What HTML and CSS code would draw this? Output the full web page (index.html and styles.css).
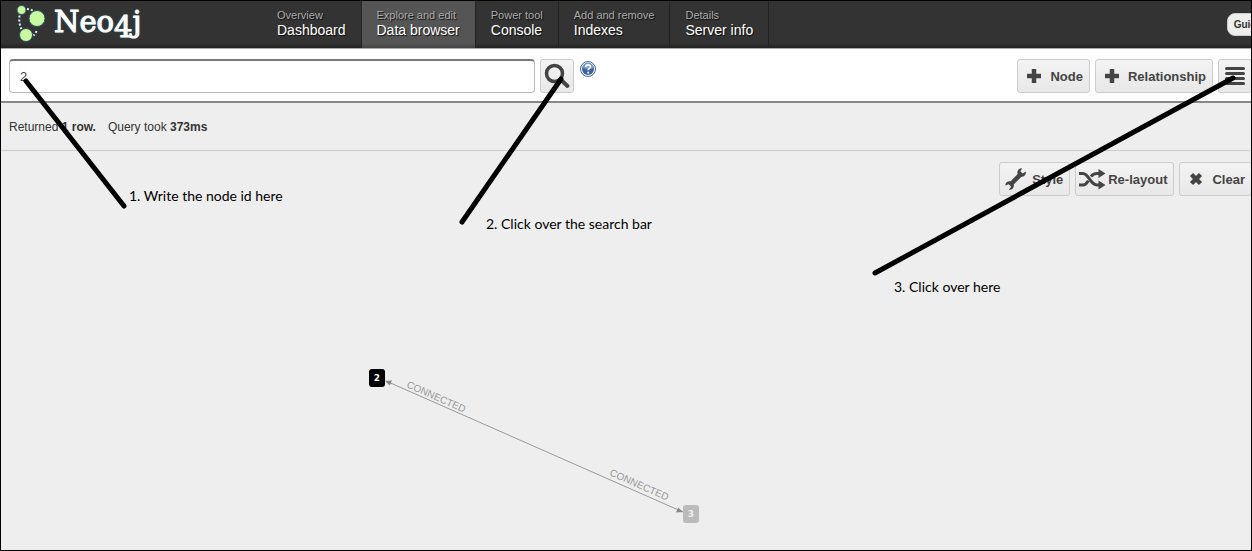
FILE: index.html
```html
<!DOCTYPE html>
<html lang="en">
<head>
<meta charset="utf-8">
<title>Neo4j Data browser</title>
<link rel="stylesheet" href="styles.css">
</head>
<body>
<div class="frame">
  <header class="header">
    <a class="logo" href="#">
      <svg class="logo-mark" viewBox="0 0 32 40" width="32" height="40" aria-hidden="true">
        <g class="logo-dots">
          <path d="M11 5l3.500.5 3 1.500M3.500 11.500l-.3 3.500.3 4 1 4 1.500 3.500M20.500 27l-1 2.500-2 2"/>
        </g>
        <g class="logo-nodes">
          <circle cx="5.500" cy="6" r="4.500"/>
          <circle cx="21" cy="14.500" r="8"/>
          <circle cx="10" cy="31" r="6.500"/>
        </g>
      </svg>
      <span class="logo-text">Neo<span class="logo-figure">4</span>j</span>
    </a>
    <nav class="tabs">
      <a class="tab" href="#"><span class="tab-note">Overview</span><span class="tab-name">Dashboard</span></a>
      <a class="tab tab-active" href="#"><span class="tab-note">Explore and edit</span><span class="tab-name">Data browser</span></a>
      <a class="tab" href="#"><span class="tab-note">Power tool</span><span class="tab-name">Console</span></a>
      <a class="tab" href="#"><span class="tab-note">Add and remove</span><span class="tab-name">Indexes</span></a>
      <a class="tab" href="#"><span class="tab-note">Details</span><span class="tab-name">Server info</span></a>
    </nav>
    <button class="guide" type="button">Guide</button>
  </header>

  <div class="toolbar">
    <input class="query" type="text" value="2" aria-label="Query">
    <button class="button" type="button" aria-label="Search">
      <svg class="icon" viewBox="0 0 32 32" width="32" height="32"><circle cx="13.500" cy="13.500" r="8" fill="none" stroke="#444" stroke-width="3.500"/><path d="M19.500 19.500l7 6.500" stroke="#444" stroke-width="4" stroke-linecap="round"/></svg>
    </button>
    <a class="help" href="#" aria-label="Help">
      <svg viewBox="0 0 16 16" width="16" height="16"><circle cx="8" cy="8" r="7.500" fill="#fff" stroke="#3e66a0"/><circle cx="8" cy="8" r="6" fill="#3a639f"/><path d="M2.500 7a5.500 5.500 0 0 1 11 0q-5 2-11 0z" fill="#7899c6"/><path d="M5.700 6.200c0-3.200 4.700-3.100 4.700-.4 0 1.700-2.300 1.700-2.300 3.500M8.100 10.800v1.600" fill="none" stroke="#fff" stroke-width="1.700"/></svg>
    </a>
    <div class="actions">
      <button class="button" type="button"><svg class="icon" viewBox="0 0 32 32" width="32" height="32"><path d="M16 9v14M9 16h14" stroke="#444" stroke-width="4.500"/></svg><span class="button-text">Node</span></button>
      <button class="button" type="button"><svg class="icon" viewBox="0 0 32 32" width="32" height="32"><path d="M16 9v14M9 16h14" stroke="#444" stroke-width="4.500"/></svg><span class="button-text">Relationship</span></button>
      <button class="button" type="button" aria-label="Switch view"><svg class="icon" viewBox="0 0 32 32" width="32" height="32"><path d="M7.500 8.500h17M7.500 13.500h17M7.500 18.500h17M7.500 23.500h17" stroke="#444" stroke-width="3" stroke-linecap="round"/></svg></button>
    </div>
  </div>

  <p class="result"><span>Returned <b>1 row.</b></span><span>Query took <b>373ms</b></span></p>

  <main class="canvas">
    <div class="actions">
      <button class="button" type="button"><svg class="icon" viewBox="0 0 32 32" width="32" height="32"><path d="M10 22L22 10" stroke="#444" stroke-width="4.500"/><path d="M25.800 8.500a4.300 4.300 0 1 1-3.600-3.300L20.300 8.300l2 2.500zM5.300 22.500a4.300 4.300 0 1 1 3.600 4.200l2.200-3-2.200-2.500z" fill="#444"/></svg><span class="button-text">Style</span></button>
      <button class="button" type="button"><svg class="icon" viewBox="0 0 32 32" width="32" height="32"><path d="M3 10.500h4c6 0 7 11.500 14 11.500h3M3 22h4c2.500 0 4-2 5.300-4.200M15 13.500c1.500-2 3-3 6-3h3" fill="none" stroke="#444" stroke-width="3"/><path d="M22.500 6l7 4.500-7 4.500zM22.500 17.500l7 4.500-7 4.500z" fill="#444"/></svg><span class="button-text">Re-layout</span></button>
      <button class="button" type="button"><svg class="icon" viewBox="0 0 32 32" width="32" height="32"><path d="M11.500 11.500l9 9M20.500 11.500l-9 9" stroke="#444" stroke-width="4.500"/></svg><span class="button-text">Clear</span></button>
    </div>
  </main>

  <svg class="graph" aria-label="Node 2 connected to node 3">
    <path class="edge" d="M385 380L682 511"/>
    <path class="edge-tip" d="M384 380l7-.5-2.200 5zM682 511l-7 .5 2.200-5z"/>
    <text class="edge-name" transform="translate(405 386) rotate(24)">CONNECTED</text>
    <text class="edge-name" transform="translate(608 474) rotate(24)">CONNECTED</text>
    <rect class="node" x="368" y="368" width="16" height="18" rx="3"/>
    <text class="node-name" x="376" y="380">2</text>
    <rect class="node node-faded" x="682" y="504" width="16" height="18" rx="3"/>
    <text class="node-name node-name-faded" x="690" y="516">3</text>
  </svg>

  <svg class="graph" aria-label="Steps">
    <path class="pointer" d="M25 80L123 205M560 78L461 221M1232 77L874 272"/>
    <text class="step" x="128" y="200">1. Write the node id here</text>
    <text class="step" x="485" y="228">2. Click over the search bar</text>
    <text class="step" x="893" y="291">3. Click over here</text>
  </svg>
</div>
</body>
</html>
```

FILE: styles.css
```css
* {
  box-sizing: border-box;
}

body {
  margin: 0;
  font-family: "Liberation Sans", Arial, sans-serif;
  color: #333;
}

.frame {
  position: relative;
  display: flex;
  flex-direction: column;
  min-height: 100vh;
  border: 1px solid #000;
  background: #eee;
  overflow: hidden;
}

.header {
  display: flex;
  align-items: stretch;
  background: linear-gradient(#333 90%, #222);
  border-bottom: 1px solid #aaa;
}

.logo {
  display: flex;
  align-items: flex-start;
  width: 261px;
  padding: 3px 0 0 15px;
  gap: 6px;
  color: #fff;
  text-decoration: none;
}

.logo-nodes {
  fill: #c6f9a0;
  stroke: #29505a;
}

.logo-dots {
  fill: none;
  stroke: #d8f2f8;
  stroke-width: 2;
  stroke-dasharray: 2 2;
}

.logo-text {
  font-family: "DejaVu Serif", serif;
  font-size: 29px;
  line-height: 36px;
  -webkit-text-stroke: 1px #fff;
  text-shadow: 0 0 2px #4db2cf;
}

.logo-figure {
  display: inline-block;
  line-height: 1;
  vertical-align: -5px;
}

.tabs {
  display: flex;
}

.tab {
  display: flex;
  flex-direction: column;
  padding: 8px 15px 10px;
  border-right: 1px solid #222;
  color: #fff;
  text-decoration: none;
  text-shadow: 1px 1px 1px #111;
}

.tab-active {
  background: linear-gradient(#555 90%, #444);
}

.tab-note {
  font-size: 11px;
  line-height: 13px;
  color: #aaa;
}

.tab-name {
  font-size: 14px;
  line-height: 16px;
}

.guide {
  align-self: center;
  margin: 0 -18px 0 auto;
  padding: 0 6px;
  border: 1px solid #ccc;
  border-radius: 8px;
  background: #eee;
  color: #333;
  font: bold 10px/21px "Liberation Sans", Arial, sans-serif;
}

.toolbar {
  display: flex;
  align-items: flex-start;
  gap: 5px;
  padding: 10px 0 8px 8px;
  background: #fff;
  border-bottom: 2px solid #888;
}

.query {
  width: calc(42% + 4px);
  height: 34px;
  padding: 0 10px;
  border: 1px solid #bbb;
  border-top: 2px solid #777;
  border-radius: 4px;
  color: #444;
  font: 13px "Liberation Sans", Arial, sans-serif;
}

.button {
  display: flex;
  align-items: center;
  flex: none;
  height: 34px;
  padding: 0;
  border: 1px solid #ccc;
  border-radius: 3px;
  background: linear-gradient(#f3f3f3, #e8e8e8);
  color: #444;
  font: bold 13px "Liberation Sans", Arial, sans-serif;
}

.icon {
  display: block;
}

.button-text {
  padding-right: 6px;
}

.help {
  display: block;
  height: 16px;
  margin: 2px 0 0 1px;
}

.actions {
  display: flex;
  gap: 5px;
  margin: 0 -1px 0 auto;
}

.result {
  display: flex;
  gap: 12px;
  margin: 0;
  padding: 16px 8px 15px;
  border-bottom: 1px solid #ccc;
  font-size: 12px;
  line-height: 16px;
}

.canvas {
  flex: 1;
  display: flex;
  align-items: flex-start;
  padding-top: 11px;
}

.graph {
  position: absolute;
  top: 0;
  left: 0;
  width: 100%;
  height: 100%;
  pointer-events: none;
}

.edge {
  stroke: #999;
}

.edge-tip {
  fill: #888;
}

.edge-name {
  font-size: 10px;
  fill: #999;
}

.node {
  fill: #000;
}

.node-faded {
  fill: #bbb;
}

.node-name {
  font-family: "DejaVu Sans", sans-serif;
  font-size: 9px;
  font-weight: bold;
  text-anchor: middle;
  fill: #fff;
}

.node-name-faded {
  fill: #eee;
}

.pointer {
  stroke: #000;
  stroke-width: 5;
  stroke-linecap: round;
}

.step {
  font-family: Lato, "Open Sans", sans-serif;
  font-size: 14px;
  fill: #000;
}
```
